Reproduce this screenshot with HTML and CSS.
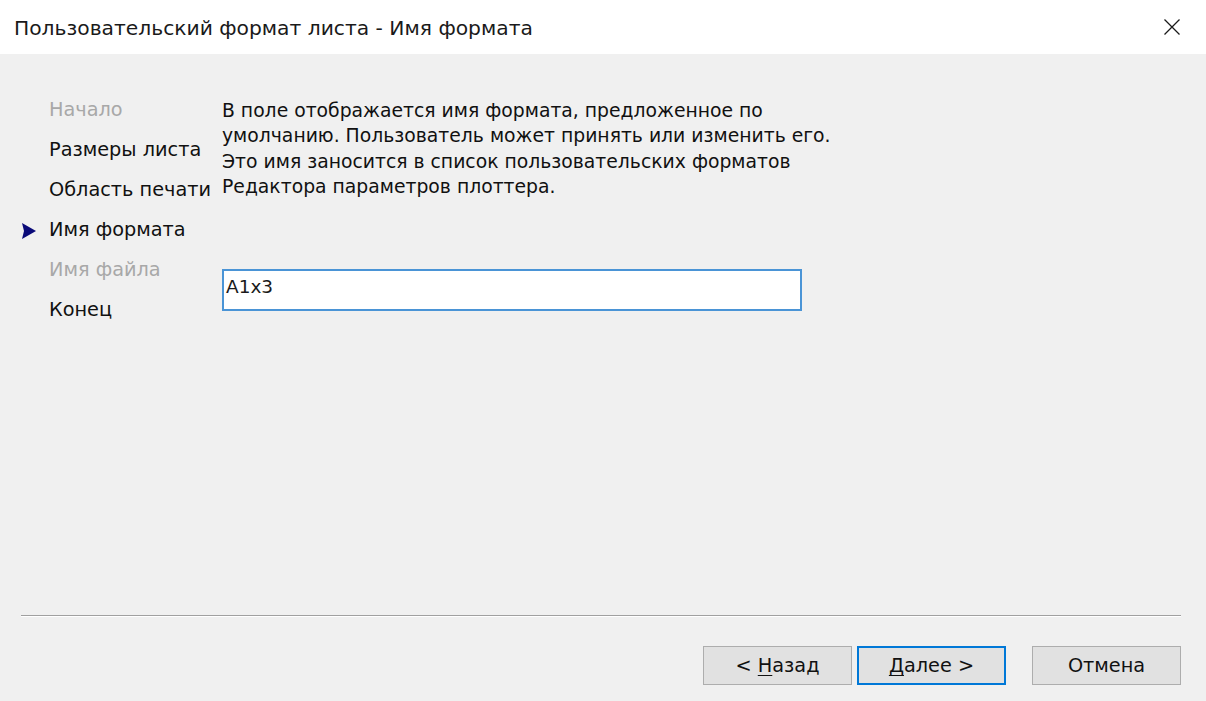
FILE: index.html
```html
<!DOCTYPE html>
<html lang="ru">
<head>
<meta charset="utf-8">
<link rel="stylesheet" href="styles.css">
</head>
<body>
<div class="dialog">
  <div class="titlebar">
    <div class="title">Пользовательский формат листа - Имя формата</div>
    <div class="close">
      <svg width="18" height="18" viewBox="0 0 18 18"><path d="M1.5 1.5 L16.5 16.5 M16.5 1.5 L1.5 16.5" stroke="#1a1a1a" stroke-width="1.3" fill="none"/></svg>
    </div>
  </div>
  <div class="body">
    <div class="main">
      <ul class="nav">
        <li class="dim">Начало</li>
        <li>Размеры листа</li>
        <li>Область печати</li>
        <li class="current"><svg class="arrow" width="16" height="16" viewBox="0 0 16 16"><path d="M1 0 L15 8 L1 16 L3 8 Z" fill="#0a0a78"/></svg>Имя формата</li>
        <li class="dim">Имя файла</li>
        <li>Конец</li>
      </ul>
      <div class="content">
        <p class="desc">В поле отображается имя формата, предложенное по<br>умолчанию. Пользователь может принять или изменить его.<br>Это имя заносится в список пользовательских форматов<br>Редактора параметров плоттера.</p>
        <div class="input">A1x3</div>
      </div>
    </div>
    <div class="sep"></div>
    <div class="buttons">
      <div class="btn"><span>&lt; <u>Н</u>азад</span></div>
      <div class="btn primary"><span><u>Д</u>алее &gt;</span></div>
      <div class="btn cancel"><span>Отмена</span></div>
    </div>
  </div>
</div>
</body>
</html>
```
FILE: styles.css
```css
html, body {
  margin: 0;
  padding: 0;
  width: 1206px;
  height: 701px;
  overflow: hidden;
  font-family: "DejaVu Sans", Verdana, sans-serif;
  color: #1a1a1a;
}
.dialog {
  display: flex;
  flex-direction: column;
  height: 701px;
  background: #f0f0f0;
}
.titlebar {
  height: 54px;
  background: #fff;
  display: flex;
  align-items: center;
  justify-content: space-between;
  padding: 0 25px 0 14px;
  flex: none;
}
.title {
  font-size: 20.25px;
  color: #1a1a1a;
  padding-top: 2px;
}
.close {
  display: flex;
  width: 18px;
  height: 18px;
}
.body {
  flex: 1;
  display: flex;
  flex-direction: column;
  padding: 0 25px 0 21px;
}
.main {
  flex: 1;
  display: flex;
  padding-top: 44px;
}
.nav {
  list-style: none;
  margin: 0;
  padding: 0 0 0 28px;
  width: 173px;
  flex: none;
  font-size: 19.3px;
}
.nav li {
  height: 40px;
  line-height: 24px;
  position: relative;
  color: #111;
  white-space: nowrap;
}
.nav li.dim {
  color: #a8a8a8;
}
.arrow {
  position: absolute;
  left: -28px;
  top: 5px;
}
.content {
  flex: none;
  width: 640px;
}
.desc {
  margin: 0;
  font-size: 18.8px;
  line-height: 25.3px;
  color: #111;
  white-space: nowrap;
}
.input {
  margin-top: 70px;
  border: 2px solid #4a94d6;
  background: #fff;
  font-size: 18.5px;
  line-height: 32px;
  padding: 0 0 4px 2px;
  width: 574px;
  height: 34px;
}
.sep {
  height: 1px;
  background: #a0a0a0;
  border-bottom: 1px solid #fff;
  flex: none;
}
.buttons {
  height: 84px;
  flex: none;
  display: flex;
  justify-content: flex-end;
  align-items: flex-start;
  padding-top: 29px;
  box-sizing: border-box;
}
.btn {
  width: 149px;
  height: 39px;
  box-sizing: border-box;
  border: 1px solid #adadad;
  background: #e1e1e1;
  font-size: 19.3px;
  display: flex;
  align-items: center;
  justify-content: center;
  color: #111;
  margin-left: 5px;
}
.btn.primary {
  border: 2px solid #0078d7;
}
.btn.cancel {
  margin-left: 26px;
}
.btn u {
  text-underline-offset: 3px;
}
```
